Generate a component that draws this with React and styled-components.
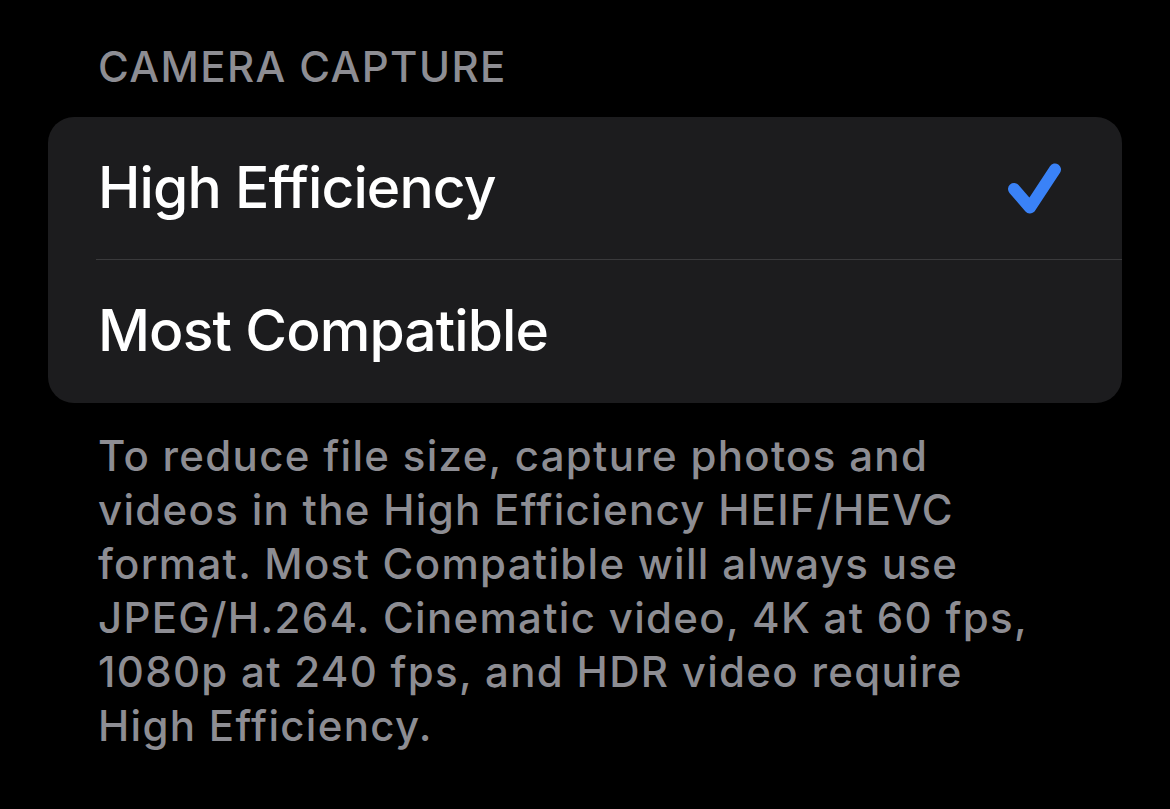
import React from 'react';
import styled, { createGlobalStyle } from 'styled-components';

const GlobalStyle = createGlobalStyle`
  html, body {
    margin: 0;
    padding: 0;
    background: #000;
  }
  body {
    font-family: Inter, "Noto Sans", "Liberation Sans", sans-serif;
    -webkit-font-smoothing: antialiased;
  }
`;

const Page = styled.div`
  width: 1170px;
  height: 809px;
  background: #000;
  padding: 42px 48px 0;
  box-sizing: border-box;
  overflow: hidden;
`;

const SectionHeader = styled.div`
  padding-left: 50px;
  font-size: 42px;
  font-weight: 500;
  line-height: 50px;
  color: #8d8d93;
  letter-spacing: 1.4px;
  margin-bottom: 25px;
`;

const Group = styled.div`
  background: #1c1c1e;
  border-radius: 26px;
  overflow: hidden;
`;

const Row = styled.div`
  position: relative;
  display: flex;
  align-items: center;
  justify-content: space-between;
  height: 143px;
  padding: 0 60px 0 50px;
  box-sizing: border-box;

  ${p => p.$divider && `
    &::after {
      content: '';
      position: absolute;
      left: 48px;
      right: 0;
      bottom: 0;
      height: 1px;
      background: #3a3a3c;
    }
  `}
`;

const Label = styled.span`
  font-size: 57px;
  font-weight: 500;
  color: #fff;
  letter-spacing: -0.9px;
  margin-top: -3px;
`;

const Footer = styled.p`
  margin: 26px 0 0;
  padding-left: 50px;
  font-size: 42px;
  font-weight: 500;
  line-height: 54px;
  color: #8d8d93;
  letter-spacing: 1.3px;
`;

const Check = () => (
  <svg width="60" height="60" viewBox="0 0 60 60" aria-hidden="true">
    <path
      d="M12 30 L28 48.5 L53 10.5"
      fill="none"
      stroke="#3a82f7"
      strokeWidth="12"
      strokeLinecap="round"
      strokeLinejoin="round"
    />
  </svg>
);

const options = [
  { label: 'High Efficiency', selected: true },
  { label: 'Most Compatible', selected: false },
];

export default function App() {
  return (
    <>
      <GlobalStyle />
      <Page>
        <SectionHeader>CAMERA CAPTURE</SectionHeader>
        <Group>
          {options.map((opt, i) => (
            <Row key={opt.label} $divider={i < options.length - 1}>
              <Label>{opt.label}</Label>
              {opt.selected && <Check />}
            </Row>
          ))}
        </Group>
        <Footer>
          To reduce file size, capture photos and<br />
          videos in the High Efficiency HEIF/HEVC<br />
          format. Most Compatible will always use<br />
          JPEG/H.264. Cinematic video, 4K at 60 fps,<br />
          1080p at 240 fps, and HDR video require<br />
          High Efficiency.
        </Footer>
      </Page>
    </>
  );
}
